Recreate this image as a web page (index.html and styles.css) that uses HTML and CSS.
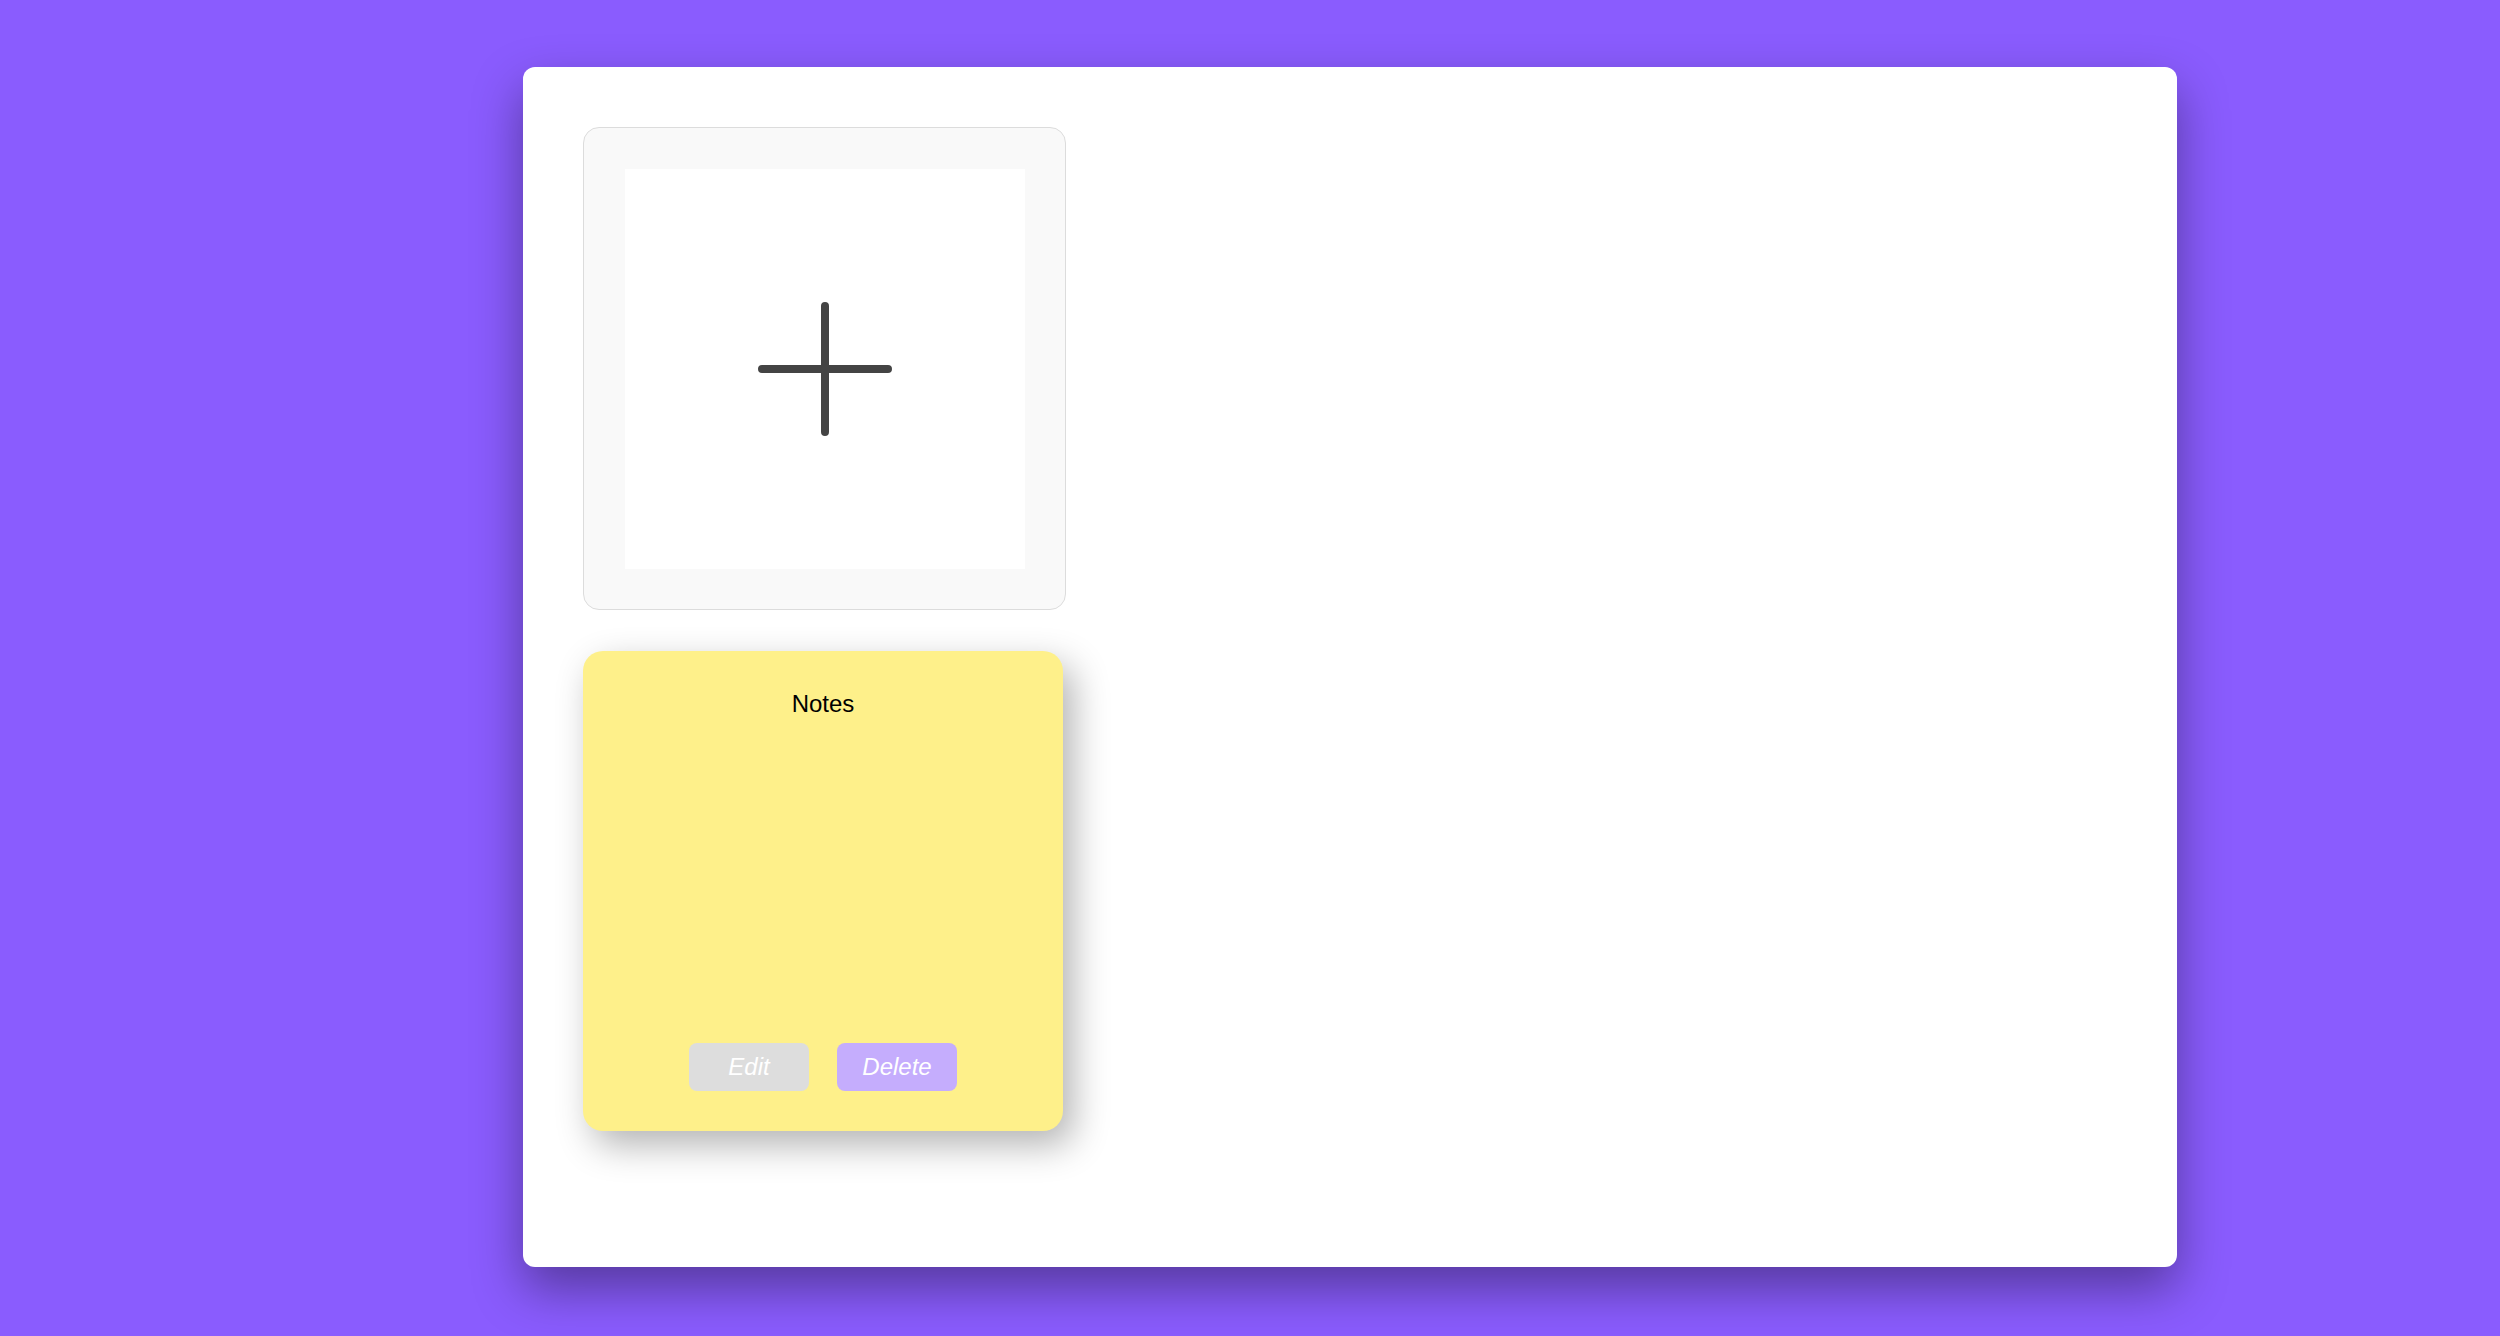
FILE: index.html
```html
<!DOCTYPE html>
<html lang="en">
<head>
<meta charset="utf-8">
<title>Notes</title>
<link rel="stylesheet" href="styles.css">
</head>
<body>
<main class="board">
  <div class="grid">
    <div class="add-card">
      <button class="add-btn" type="button" aria-label="Add note">
        <svg class="plus" viewBox="0 0 400 400" width="400" height="400">
          <path d="M137 200H263M200 137V263" stroke="#444" stroke-width="8" stroke-linecap="round" fill="none"/>
        </svg>
      </button>
    </div>
    <div class="note">
      <div class="note-title">Notes</div>
      <div class="note-actions">
        <button class="btn btn-edit" type="button">Edit</button>
        <button class="btn btn-delete" type="button">Delete</button>
      </div>
    </div>
  </div>
</main>
</body>
</html>
```

FILE: styles.css
```css
html, body {
  margin: 0;
  padding: 0;
}
body {
  background: #8a5cfe;
  font-family: "Liberation Sans", Arial, sans-serif;
  min-height: 1336px;
  box-sizing: border-box;
  padding: 67px 0 0 523px;
  overflow: hidden;
}
.board {
  width: 1654px;
  height: 1200px;
  box-sizing: border-box;
  background: #ffffff;
  border-radius: 12px;
  padding: 60px;
  box-shadow: 0 22px 50px rgba(0, 0, 0, 0.38);
}
.grid {
  display: flex;
  flex-direction: column;
  align-items: flex-start;
  gap: 41px;
}
.add-card {
  box-sizing: border-box;
  width: 483px;
  height: 483px;
  padding: 41px;
  background: #f9f9f9;
  border: 1px solid #dcdcdc;
  border-radius: 16px;
}
.add-btn {
  display: block;
  width: 400px;
  height: 400px;
  padding: 0;
  margin: 0;
  border: none;
  background: #ffffff;
}
.plus {
  display: block;
}
.note {
  box-sizing: border-box;
  width: 480px;
  height: 480px;
  background: #fef08a;
  border-radius: 20px;
  box-shadow: 10px 14px 36px rgba(0, 0, 0, 0.3);
  padding: 39px 0 40px;
  display: flex;
  flex-direction: column;
  align-items: center;
  justify-content: space-between;
}
.note-title {
  font-size: 24px;
  line-height: 28px;
  color: #000;
}
.note-actions {
  display: flex;
  gap: 28px;
}
.btn {
  width: 120px;
  height: 48px;
  border: none;
  border-radius: 8px;
  color: #ffffff;
  font-family: "Liberation Sans", Arial, sans-serif;
  font-style: italic;
  font-size: 24px;
  padding: 0;
}
.btn-edit {
  background: #dddddd;
}
.btn-delete {
  background: #c5adfd;
}
```
